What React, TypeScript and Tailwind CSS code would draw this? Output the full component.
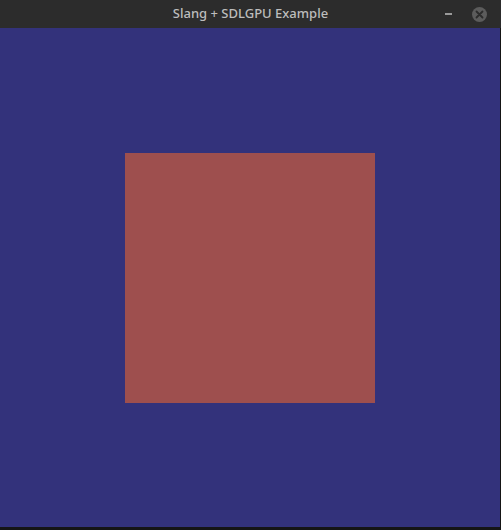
export default function App() {
  return (
    <div className="w-[501px] h-[530px] bg-[#151515] flex flex-col overflow-hidden">
      <div className="h-[28px] bg-[#2c2c2c] relative flex items-center justify-center shrink-0">
        <span
          className="text-[13px] font-medium text-[#bdbdbd] leading-none pb-[1px]"
          style={{ fontFamily: '"Noto Sans", "DejaVu Sans", sans-serif' }}
        >
          Slang + SDLGPU Example
        </span>
        <div className="absolute left-[445px] top-[13px] w-[7px] h-[2px] bg-[#9a9a9a]" />
        <div className="absolute left-[472px] top-[7px] w-[15px] h-[15px] rounded-full bg-[#5c5c5c] flex items-center justify-center">
          <svg width="9" height="9" viewBox="0 0 9 9">
            <path d="M1.5 1.5 L7.5 7.5 M7.5 1.5 L1.5 7.5" stroke="#2c2c2c" strokeWidth="1.8" strokeLinecap="round" />
          </svg>
        </div>
      </div>
      <div className="w-[500px] h-[499px] bg-[#33327b] pt-[125px] pl-[125px]">
        <div className="w-[250px] h-[250px] bg-[#9e4f4e]" />
      </div>
    </div>
  );
}
